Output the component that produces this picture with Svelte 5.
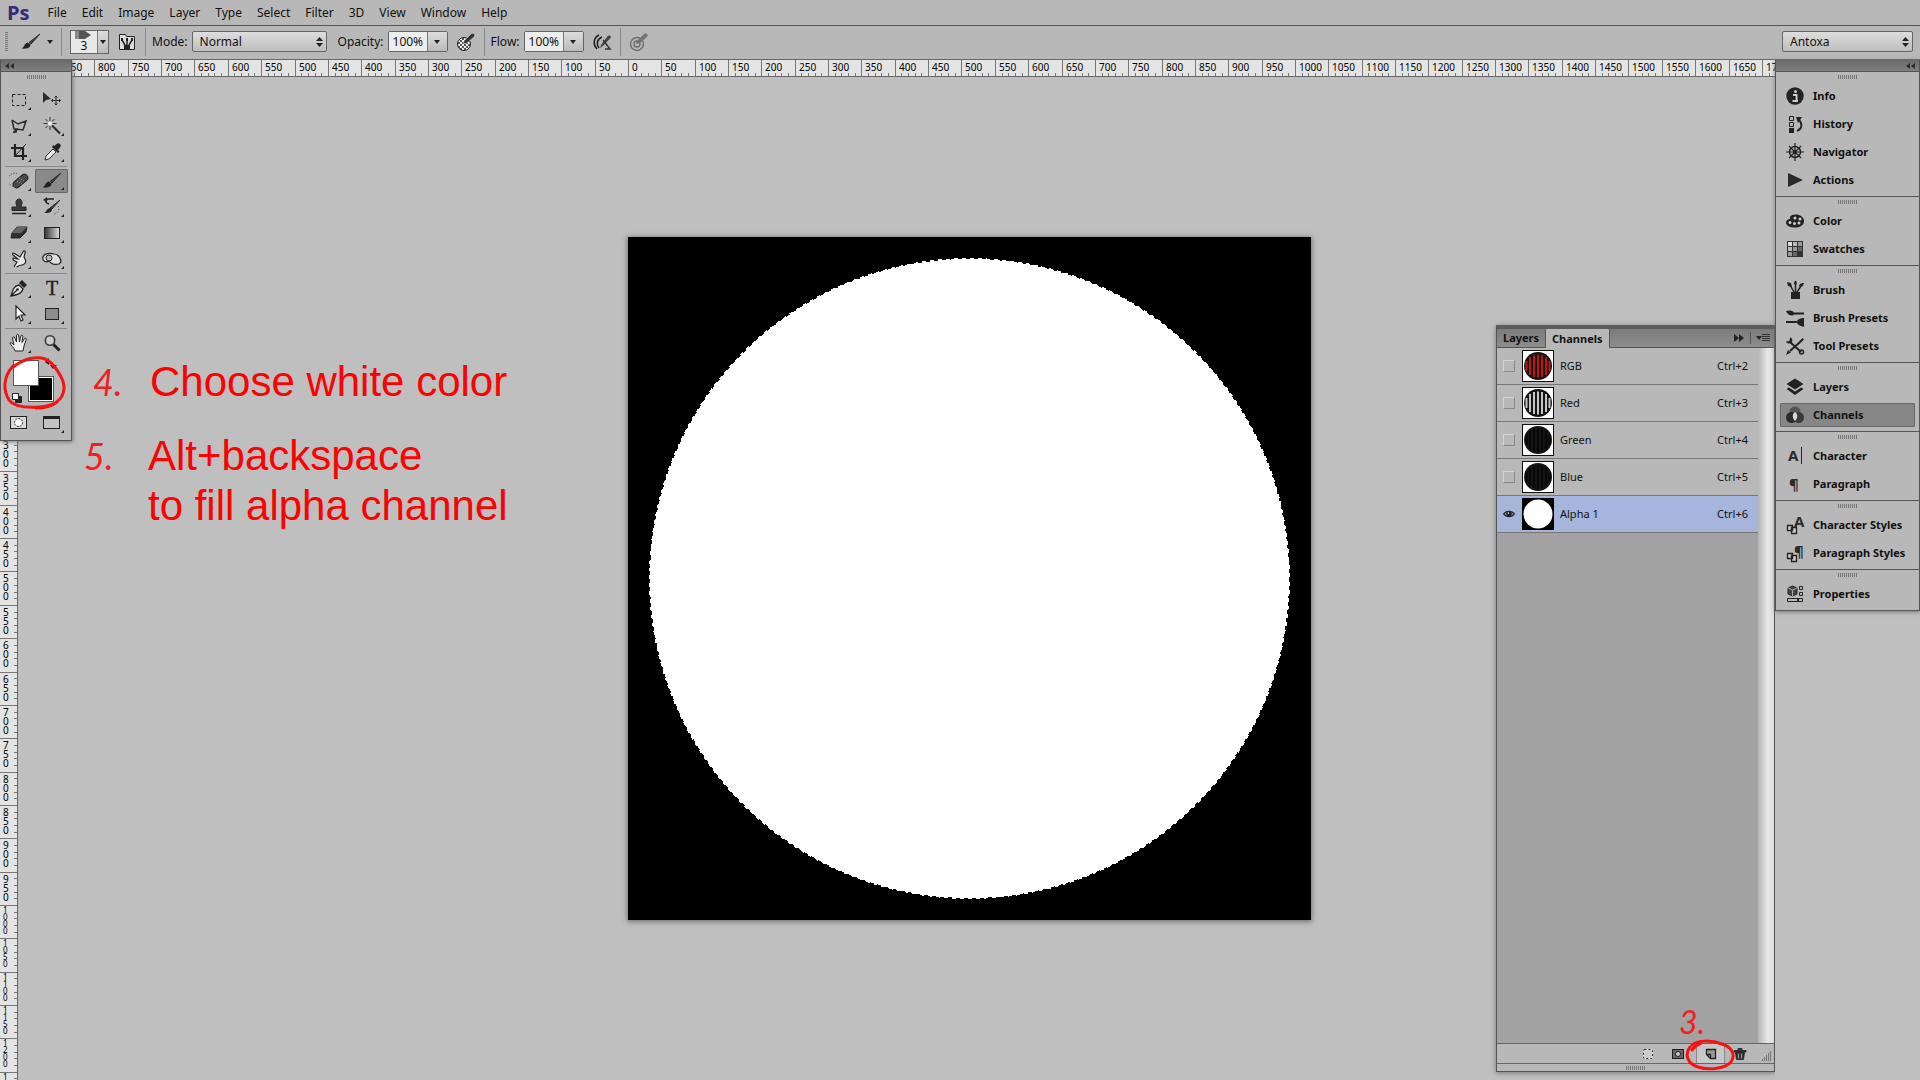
<script>
  const menus = ['File', 'Edit', 'Image', 'Layer', 'Type', 'Select', 'Filter', '3D', 'View', 'Window', 'Help'];

  const icons = {
    marquee: '<rect x="3.5" y="4.5" width="13" height="11" fill="none" stroke="#222" stroke-dasharray="3 2"/>',
    move: '<path d="M1 2v11l3-3 5-1z" fill="#2b2b2b"/><path d="M14 6v9M9.500 10.500h9M12.500 7.500l1.500-1.500 1.500 1.500M12.500 13.500l1.500 1.500 1.500-1.500M11 9l-1.500 1.500 1.500 1.500M17 9l1.500 1.500-1.500 1.500" fill="none" stroke="#2b2b2b"/>',
    lasso: '<path d="M3 4l6 4 8-3-3 9-7-1-2 4M3 4l2 9 3 0-1 3-3 0" fill="none" stroke="#2b2b2b" stroke-width="1.500"/>',
    wand: '<path d="M8 1v4M8 10v4M1.500 7.500h4M10.500 7.500h4M3.500 3l2.500 2.500M12.500 3l-2.500 2.500M3.500 12l2.500-2.500" stroke="#333"/><circle cx="8" cy="7.500" r="2" fill="#eee"/><path d="M10 9.500l8 8" stroke="#2b2b2b" stroke-width="2.200"/>',
    crop: '<path d="M6 2v12h12M2 6h12v12" fill="none" stroke="#222" stroke-width="2.200"/><path d="M17 2L6 14" stroke="#222"/>',
    dropper: '<path d="M3 18l1-4 7-7 3 3-7 7z" fill="#e8e8e8" stroke="#333"/><path d="M10 5l6 6 1.500-1.500-1.500-1.500 2-2.500a2.300 2.300 0 0 0-3.500-3.500l-2 2-1.200-1z" fill="#222"/>',
    heal: '<path d="M8 2.500a5.500 5.500 0 1 0-4 13" fill="none" stroke="#333" stroke-dasharray="1 1.500"/><rect x="3" y="6.500" width="17" height="7" rx="3.500" transform="rotate(-40 11.500 10)" fill="#4a4a4a" stroke="#222"/><path d="M8 10l5 3M10 7l5 3" stroke="#aaa" stroke-dasharray="1 1.500"/>',
    brush: '<path d="M19 2L10 12l-2-1.500z" fill="#444" stroke="#2b2b2b"/><path d="M9.500 12.500c0 4-5 4.500-9 4 3-1 2.500-5 6-6z" fill="#222"/>',
    stamp: '<path d="M8 9c-2-3-1-7 2-7s4 4 2 7v1h5v3.500H3V10h5z" fill="#3a3a3a" stroke="#222"/><path d="M3 16.500h14" stroke="#222" stroke-width="1.500"/>',
    histbrush: '<path d="M18 3L10 12l-2-1z" fill="#444" stroke="#2b2b2b"/><path d="M10 12c0 4-4 4-8 4 3-1 2-4 6-5z" fill="#222"/><path d="M12 2H6C3 3 3 6 7 7" fill="none" stroke="#222" stroke-width="1.500"/><path d="M5 0v5L1 3z" fill="#222"/><path d="M16 9c2 3 0 8-5 8" fill="none" stroke="#333" stroke-dasharray="1 2"/>',
    eraser: '<path d="M8 4h10l-1 5-6 6H2l1-5z" fill="#303030" stroke="#222"/><path d="M8 4h10l-6 6H3z" fill="#666"/>',
    gradient: '<defs><linearGradient id="toolGrad"><stop stop-color="#333"/><stop offset="1" stop-color="#ddd"/></linearGradient></defs><rect x="2.500" y="4.500" width="15" height="11" fill="url(#toolGrad)" stroke="#222"/>',
    smudge: '<path d="M5 18l3-5-3-1.500c-2-2-1-3 1-2L9 10 4 6c-1-2 0-2.500 1.500-1.500L11 8l3-5c1-2 3-1 2 1l-1 4 1.500 3c1 3-2 5.500-6 5.500l-3 1.500" fill="#e8e8e8" stroke="#222" stroke-width="1.200"/>',
    sponge: '<path d="M1 8c1-4 7-4 11-3 4 0 7 4 7 8l-2 2c-5 1-8 0-10-3-3 2-7 0-6-4z" fill="#ddd" stroke="#222" stroke-width="1.200"/><circle cx="7" cy="9" r="3" fill="#bbb" stroke="#222"/>',
    pen: '<path d="M2 18c2-7 3-10 8-11l4 4c-1 4-5 6-12 7zM2 18l6-6" fill="#e2e2e2" stroke="#222" stroke-width="1.300"/><circle cx="8.500" cy="11.500" r="1.300" fill="#222"/><path d="M10 5l3-3 5 5-3 3z" fill="#222"/>',
    pointer: '<path d="M7 2v13l3-3 2 5 2-1-2-5h4z" fill="#fff" stroke="#222" stroke-width="1.200"/>',
    shape: '<rect x="3.500" y="4.500" width="13" height="11" fill="#8c8c8c" stroke="#222"/>',
    hand: '<path d="M6 18c-1-4-4-5-5-8 1-1 2 0 4 2L3.500 5c0-1.500 2-1.500 2.300 0L7.500 9V2.500c.3-1.500 2-1.500 2.200 0L10.500 9l1.300-6c.4-1.300 2-1 2 .5L13 9.500l2.500-4c1-1 2.200 0 1.700 1L15 13l-1 5z" fill="#eee" stroke="#222"/>',
    zoom: '<circle cx="8" cy="7.500" r="4.700" fill="#ccc" stroke="#3a3a3a" stroke-width="1.600"/><path d="M11.500 11.500l6 6" stroke="#222" stroke-width="3"/>',
    mask: '<rect x="1.500" y="3.500" width="16" height="12" fill="#d8d8d8" stroke="#222"/><circle cx="9.500" cy="9.500" r="4" fill="#fff" stroke="#222" stroke-dasharray="2 1"/>',
    screen: '<rect x="1.500" y="3.500" width="16" height="12" fill="#c4c4c4" stroke="#222"/><path d="M1 4.500h17" stroke="#222" stroke-width="3"/>',
    info: '<circle cx="10" cy="10" r="8.700" fill="#222"/><path d="M8 9h3.500v6M7.500 15H13" stroke="#ccc" stroke-width="2"/><circle cx="10.500" cy="5.500" r="1.500" fill="#ccc"/>',
    history: '<path d="M4.500 2.500h4v4h-4zM4.500 8.500h4v4h-4z" fill="none" stroke="#222"/><path d="M4 14h5v5H4z" fill="#222"/><path d="M12 17c5-2 6-7 2-11" fill="none" stroke="#222" stroke-width="1.800"/><path d="M11 3h6l-4 6z" fill="#222"/>',
    navigator: '<circle cx="10" cy="10" r="5.500" fill="none" stroke="#222" stroke-width="1.500"/><path d="M10 1v18M1 10h18M4 4l12 12M16 4L4 16" stroke="#222" stroke-width="1.200"/><circle cx="10" cy="10" r="2" fill="#222"/>',
    actions: '<path d="M3 3l15 7-15 7z" fill="#2b2b2b"/>',
    color: '<path d="M1 12c0-3 2-4 4-4l0-2c2-3 7-3 11-1 4 2 4 8 0 10-3 2-9 2-13 0-1-1-2-2-2-3z" fill="#222"/><g fill="#ccc"><circle cx="5" cy="11.500" r="1.500"/><circle cx="9.500" cy="12.500" r="1.500"/><circle cx="14" cy="12" r="1.500"/><circle cx="15" cy="8" r="1.500"/><circle cx="10" cy="7" r="1.500"/></g>',
    swatches: '<path d="M2 2h16v16H2z" fill="#333"/><g><path d="M3 3h4v4H3z" fill="#ddd"/><path d="M8 3h4v4H8zM3 8h4v4H3z" fill="#bbb"/><path d="M13 3h4v4h-4zM8 8h4v4H8zM3 13h4v4H3z" fill="#999"/><path d="M13 8h4v4h-4zM8 13h4v4H8z" fill="#666"/></g>',
    brushes: '<path d="M6 12h9v7H6z" fill="#222"/><path d="M9 12L5 5M10.500 12V4M12 12l4-6" stroke="#222" stroke-width="1.500"/><path d="M2 2l4 1 1 4-4-1zM9 4c0-2 1-4 2-3s1 3 0 4zM14 6c1-3 3-3 5-3-1 3-2 4-4 4z" fill="#222"/>',
    presets: '<path d="M8 5.500h11M1 14h11" stroke="#222" stroke-width="1.800"/><path d="M1 3c3-1 8-1 8 2.500S3 8 1 3zM12 14c0-3 4-4 7-4v9c-3-1-7-2-7-5z" fill="#222"/>',
    tools: '<path d="M5 6l11 10M14 7L5 15" stroke="#222" stroke-width="2"/><path d="M5 1.500L4.500 5 1 5.500C2 8 5 8 6.500 6.500S7.500 2 5 1.500z" fill="#222"/><circle cx="16.500" cy="16" r="2" fill="none" stroke="#222" stroke-width="1.500"/><path d="M1 19l2-5 3 2.500zM13 6.500L17.500 2l1.500 1.500L14.500 8z" fill="#222"/>',
    layers: '<path d="M10 1.500l8.500 5.500-8.500 5.500L1.500 7z" fill="#222"/><path d="M1.500 12L4 10.500l6 4 6-4 2.500 1.500-8.500 6z" fill="#222"/>',
    channels: '<circle cx="10" cy="7" r="5.500" fill="#555"/><circle cx="6.500" cy="12.500" r="5.500" fill="#2b2b2b"/><circle cx="13.500" cy="12.500" r="5.500" fill="#3a3a3a"/><path d="M10 7c3 2 3 6 0 9-3-3-3-7 0-9z" fill="#d8d8d8"/>',
    character: '<path d="M16.500 1v17" stroke="#222"/>',
    paragraph: '',
    charstyles: '<path d="M6.500 12.500h5v6h-5zM2.500 10.500h5v5h-5z" fill="#c8c8c8" stroke="#222" stroke-width="1.300"/>',
    parstyles: '<path d="M6.500 12.500h5v6h-5zM2.500 10.500h5v5h-5z" fill="#c8c8c8" stroke="#222" stroke-width="1.300"/>',
    properties: '<path d="M3 4l4.500-2L12 4v6l-4.500 2L3 10z" fill="#444" stroke="#222"/><path d="M3 4l4.500 2L12 4M7.500 6v6" stroke="#aaa" fill="none"/><path d="M14.500 2.500h3v3h-3zM14.500 8.500h3v3h-3zM2.500 14.500h15v3h-15z" fill="none" stroke="#222"/><path d="M12 15h2v2h-2z" fill="#222"/>',
    folder: '<path d="M2.500 2.500h6l1 2h8v13h-15z" fill="#ddd" stroke="#222"/><path d="M7 13h6v4H7z" fill="#222"/><path d="M8 13L5 8M10 13V7M12 13l3-5" stroke="#222" stroke-width="1.500"/><path d="M4 6h2v3H4zM9 6h2v3H9zM14 6h2v3h-2z" fill="#222"/>',
    tabletOpacity: '<defs><pattern id="check" width="4" height="4" patternUnits="userSpaceOnUse"><path d="M0 0h4v4H0z" fill="#eee"/><path d="M0 0h2v2H0zM2 2h2v2H2z" fill="#555"/></pattern></defs><circle cx="8" cy="12" r="6.500" fill="url(#check)" stroke="#222"/><path d="M7 12l1-3 7-7c2-2 5 1 3 3l-7 6z" fill="#333" stroke="#ccc" stroke-width=".6"/>',
    airbrush: '<path d="M7 3c-6 3-6 10-2 14M10 5c-5 2-6 7-3 11" fill="none" stroke="#222" stroke-width="1.600"/><path d="M8 16l1-3 6-8c2-3 5-1 3.500 1L12 13z" fill="#444"/><path d="M11 8l7 9h-5" fill="none" stroke="#333" stroke-width="1.500"/>',
    tabletSize: '<g opacity=".5"><circle cx="8" cy="12" r="6.500" fill="none" stroke="#222" stroke-width="1.400"/><circle cx="8" cy="12" r="3" fill="none" stroke="#222" stroke-width="1.400"/><path d="M7 12l1-3 7-7c2-2 5 1 3 3l-7 6z" fill="#333"/></g>',
    eye: '<path d="M1 10c4-6 14-6 18 0-4 6-14 6-18 0z" fill="#8690a8" stroke="#222" stroke-width="2"/><circle cx="10" cy="10" r="4.500" fill="#222"/><circle cx="9" cy="8.500" r="1.300" fill="#ddd"/>',
    loadSel: '<rect x="5.500" y="5.500" width="9" height="9" rx="1" fill="#ccc" stroke="#eee"/><rect x="5.500" y="5.500" width="9" height="9" rx="1" fill="none" stroke="#222" stroke-dasharray="2 2"/>',
    saveSel: '<rect x="4.500" y="5.500" width="11" height="9" fill="#666" stroke="#222"/><circle cx="10" cy="10" r="2.500" fill="#ccc" stroke="#222"/>',
    newChan: '<path d="M5.500 5.500h9v9H9.500l-4-4zM5.500 10.500h4v4" fill="#999" stroke="#222" stroke-width="1.300"/>',
    trash: '<path d="M5.500 8.500l1 7h7l1-7zM4 6.500h12v1.500H4zM8 6V4.500h4V6" fill="#333" stroke="#222" stroke-width=".8"/><path d="M8.500 9.500v5M11.500 9.500v5" stroke="#999"/>'
  };

  const toolGroups = [
    ['marquee', 'move', 'lasso', 'wand', 'crop', 'dropper'],
    ['heal', 'brush', 'stamp', 'histbrush', 'eraser', 'gradient', 'smudge', 'sponge'],
    ['pen', 'type', 'pointer', 'shape'],
    ['hand', 'zoom']
  ];
  const noFlyout = ['move', 'zoom', 'mask'];
  const viewTools = ['mask', 'screen'];

  const dock = [
    [['info', 'Info'], ['history', 'History'], ['navigator', 'Navigator'], ['actions', 'Actions']],
    [['color', 'Color'], ['swatches', 'Swatches']],
    [['brushes', 'Brush'], ['presets', 'Brush Presets'], ['tools', 'Tool Presets']],
    [['layers', 'Layers'], ['channels', 'Channels']],
    [['character', 'Character'], ['paragraph', 'Paragraph']],
    [['charstyles', 'Character Styles'], ['parstyles', 'Paragraph Styles']],
    [['properties', 'Properties']]
  ];

  const channels = [
    { name: 'RGB', key: 'Ctrl+2', stripe: '#c01410' },
    { name: 'Red', key: 'Ctrl+3', stripe: '#c4c4c4' },
    { name: 'Green', key: 'Ctrl+4', stripe: '#060606' },
    { name: 'Blue', key: 'Ctrl+5', stripe: '#060606' },
    { name: 'Alpha 1', key: 'Ctrl+6', stripe: null }
  ];

  // Document zoom: 50 document units span this many screen pixels.
  const STEP = 683 / 1024 * 50;
  const marks = (origin, from, to) =>
    Array.from({ length: to - from + 1 }, (_, i) => ({
      label: String(Math.abs(from + i) * 50),
      at: Math.round(origin + (from + i) * STEP),
      minor: [1, 2, 3, 4].map((n) => Math.round(origin + (from + i + n / 5) * STEP))
    }));
  const across = marks(628, -17, 34);
  const down = marks(161, 5, 25);
</script>

{#snippet icon(name)}
  <svg class="icon" viewBox="0 0 20 20" aria-hidden="true">
    {@html icons[name] ?? ''}
    {#if name === 'type'}<text class="serif" x="10" y="17" text-anchor="middle">T</text>{/if}
    {#if name === 'character'}<text class="glyph" x="3" y="15">A</text>{/if}
    {#if name === 'paragraph'}<text class="glyph" x="4" y="16">¶</text>{/if}
    {#if name === 'charstyles'}<text class="glyph" x="9" y="12">A</text>{/if}
    {#if name === 'parstyles'}<text class="glyph" x="9" y="14">¶</text>{/if}
  </svg>
{/snippet}

{#snippet toolButton(name)}
  <button class="tool" class:active={name === 'brush'} aria-label={name}>
    {@render icon(name)}
    {#if !noFlyout.includes(name)}<span class="flyout"></span>{/if}
  </button>
{/snippet}

{#snippet updown()}
  <svg class="updown" viewBox="0 0 7 10" aria-hidden="true"><path d="M0 4l3.500-4L7 4zM0 6h7l-3.500 4z" fill="#222" /></svg>
{/snippet}

<div class="app">
  <nav class="menubar" aria-label="Main menu">
    <span class="logo">Ps</span>
    {#each menus as m}<button class="menu">{m}</button>{/each}
  </nav>

  <div class="options">
    <span class="vgrip"></span>
    <button class="preset" aria-label="Tool preset">{@render icon('brush')}<span class="caret"></span></button>
    <span class="rule"></span>
    <button class="size" aria-label="Brush size">
      <span class="tip">
        <svg viewBox="0 0 18 8" aria-hidden="true"><path d="M0 0h10l6 4-6 4H0z" fill="#555" /><path d="M0 0h4v8H0z" fill="#888" /></svg>
        3
      </span>
      <span class="drop"><span class="caret"></span></span>
    </button>
    <button class="plain" aria-label="Brush panel">{@render icon('folder')}</button>
    <span class="rule"></span>
    <label for="mode">Mode:</label>
    <span class="select mode"><select id="mode"><option>Normal</option></select>{@render updown()}</span>
    <label for="opacity">Opacity:</label>
    <span class="combo"><input id="opacity" value="100%" /><button aria-label="Opacity slider"><span class="caret"></span></button></span>
    <button class="plain" aria-label="Pressure for opacity">{@render icon('tabletOpacity')}</button>
    <span class="rule"></span>
    <label for="flow">Flow:</label>
    <span class="combo"><input id="flow" value="100%" /><button aria-label="Flow slider"><span class="caret"></span></button></span>
    <button class="plain" aria-label="Airbrush">{@render icon('airbrush')}</button>
    <span class="rule"></span>
    <button class="plain" aria-label="Pressure for size">{@render icon('tabletSize')}</button>
    <span class="select workspace"><select aria-label="Workspace"><option>Antoxa</option></select>{@render updown()}</span>
  </div>

  <div class="desk">
    <main class="view">
      <svg class="hruler" aria-hidden="true">
        {#each across as m}
          <path d="M{m.at + 0.5} 0v16" />
          <path d={m.minor.map((x) => `M${x + 0.5} 13v3`).join('')} />
          <text x={m.at + 4} y="11">{m.label}</text>
        {/each}
      </svg>
      <svg class="vruler" aria-hidden="true">
        {#each down as m}
          <path d="M0 {m.at + 0.5}h17" />
          <path d={m.minor.map((y) => `M14 ${y + 0.5}h3`).join('')} />
          <text y={m.at + (m.label.length > 3 ? 1 : 2)} class:small={m.label.length > 3}>
            {#each m.label as d}<tspan x="3" dy={m.label.length > 3 ? 7 : 9}>{d}</tspan>{/each}
          </text>
        {/each}
      </svg>

      <svg class="document" viewBox="0 0 683 683" role="img" aria-label="Alpha channel">
        <rect width="683" height="683" />
        <circle cx="341.500" cy="341.500" r="320.500" fill="#fff" shape-rendering="crispEdges" />
        <circle cx="341.500" cy="341.500" r="320" fill="none" stroke="#000" stroke-dasharray="4 4" shape-rendering="crispEdges" />
      </svg>

      <p class="note four"><span class="num">4.</span><span>Choose white color</span></p>
      <p class="note five"><span class="num">5.</span><span>Alt+backspace<br />to fill alpha channel</span></p>

      <aside class="toolbar" aria-label="Tools">
        <div class="strip"><svg viewBox="0 0 9 6" aria-hidden="true"><path d="M4 0v6L0 3zM9 0v6L5 3z" /></svg></div>
        <span class="grip"></span>
        {#each toolGroups as group, i}
          {#if i}<hr />{/if}
          <div class="tools">{#each group as t}{@render toolButton(t)}{/each}</div>
        {/each}
        <div class="swatches">
          <button class="bg" aria-label="Background color"></button>
          <button class="fg" aria-label="Foreground color"></button>
          <svg viewBox="0 0 70 55" aria-hidden="true">
            <path d="M14.500 40.500h6v6h-6z" fill="#222" stroke="#222" /><path d="M11.500 37.500h6v6h-6z" fill="#fff" stroke="#222" />
            <path d="M47 6c3 0 5 2 5 5" fill="none" stroke="#222" stroke-width="1.500" /><path d="M44 6l4-4v7zM49 9h7l-4 4z" fill="#222" />
          </svg>
        </div>
        <div class="tools">{#each viewTools as t}{@render toolButton(t)}{/each}</div>
        <svg class="ring left" viewBox="0 0 64 58" aria-hidden="true">
          <path d="M10 12C22 3 34 1 42 4c8 3 20 20 19 30-1 10-9 17-24 18-14 1-26 0-31-7C0 35 0 22 10 11M33 53c10 0 16-2 21-6" />
        </svg>
      </aside>

      <section class="panel" aria-label="Channels">
        <div class="tabs">
          <button class="tab">Layers</button>
          <button class="tab on">Channels</button>
          <svg viewBox="0 0 38 12" aria-hidden="true">
            <path d="M1 2v8l5-4zM6 2v8l5-4z" fill="#222" /><path d="M17.500 0v12" stroke="#555" />
            <path d="M23 4h6l-3 4z" fill="#222" /><path d="M29 2.500h8M29 4.500h8M29 6.500h8M29 8.500h8" stroke="#333" />
          </svg>
        </div>
        <div class="body">
          <ul>
            {#each channels as c}
              <li class:sel={!c.stripe}>
                <label class="vis">
                  <input type="checkbox" checked={!c.stripe} aria-label="Show {c.name}" />
                  {#if !c.stripe}{@render icon('eye')}{/if}
                </label>
                <svg class="thumb" viewBox="0 0 32 32" aria-hidden="true">
                  {#if c.stripe}
                    <rect x=".5" y=".5" width="31" height="31" fill="#fff" stroke="#111" />
                    <circle cx="16" cy="16" r="14" fill="#141414" />
                    <path d="M4.500 11v10M8 7v18M12 5v22M16 4.500v23M20 5v22M24 7v18M27.500 11v10" stroke={c.stripe} stroke-width="2" />
                  {:else}
                    <rect width="32" height="32" /><circle cx="16" cy="16" r="14.500" fill="#fff" />
                  {/if}
                </svg>
                <span>{c.name}</span>
                <kbd>{c.key}</kbd>
              </li>
            {/each}
          </ul>
          <div class="scroll"></div>
        </div>
        <div class="actions">
          <button aria-label="Load selection">{@render icon('loadSel')}</button>
          <button aria-label="Save selection">{@render icon('saveSel')}</button>
          <button class="hot" aria-label="New channel">{@render icon('newChan')}</button>
          <button aria-label="Delete channel">{@render icon('trash')}</button>
          <svg class="corner" viewBox="0 0 10 10" aria-hidden="true"><path d="M8 1h1M6 3h1M8 3h1M4 5h1M6 5h1M8 5h1M2 7h1M4 7h1M6 7h1M8 7h1M0 9h1M2 9h1M4 9h1M6 9h1M8 9h1" stroke="#333" /></svg>
        </div>
        <div class="foot"><span class="grip"></span></div>
        <span class="num three">3.</span>
        <svg class="ring right" viewBox="0 0 52 34" aria-hidden="true">
          <path d="M6 8c-6 8-2 17 8 20 12 4 28 1 33-5 5-7 1-15-9-18C28 1 13 1 8 6M17 4c-5 2-7 4-9 7" />
        </svg>
      </section>
    </main>

    <aside class="dock" aria-label="Panels">
      <div class="strip end"><svg viewBox="0 0 9 6" aria-hidden="true"><path d="M4 0v6L0 3zM9 0v6L5 3z" /></svg></div>
      {#each dock as group}
        <div class="group">
          <span class="grip"></span>
          {#each group as [id, label]}
            <button class:on={id === 'channels'}>{@render icon(id)}{label}</button>
          {/each}
        </div>
      {/each}
    </aside>
  </div>
</div>

<style>
  :global(body) { margin: 0; background: #bfbfbf; }
  .app { display: flex; flex-direction: column; height: 100vh; overflow: hidden; font: 12px/16px "Noto Sans", sans-serif; color: #111; }
  .app * { box-sizing: border-box; }
  button { font: inherit; color: inherit; background: none; border: 0; padding: 0; margin: 0; }
  svg { display: block; flex: none; }
  .icon { width: 20px; height: 20px; }
  .serif { font: 20px "Liberation Serif", serif; fill: #222; stroke: #222; stroke-width: .4px; }
  .glyph { font: bold 15px "Noto Sans", sans-serif; fill: #2b2b2b; }

  .menubar { display: flex; align-items: center; gap: 15px; flex: none; height: 25px; padding: 0 7px; background: #b8b8b8; }
  .logo { font: bold 20px/24px "Open Sans", sans-serif; color: #352b76; margin-right: 3px; }

  .options { display: flex; align-items: center; flex: none; height: 35px; padding: 0 7px 2px 5px; background: #b8b8b8; border-top: 1px solid #555; border-bottom: 1px solid #666; }
  .options .rule { width: 1px; height: 28px; background: #888; margin: 0 8px; }
  .vgrip { width: 3px; height: 20px; background: repeating-linear-gradient(#777 0 1px, transparent 1px 2px); margin-right: 13px; }
  .preset { display: flex; align-items: center; gap: 6px; }
  .caret { border: 3px solid transparent; border-top: 4px solid #222; border-bottom: 0; }
  .size { display: flex; width: 39px; height: 24px; border: 1px solid #666; }
  .tip { flex: 1; background: #e8e8e8; line-height: 14px; }
  .tip svg { width: 18px; height: 8px; margin-left: 4px; }
  .drop { display: flex; align-items: center; justify-content: center; width: 11px; border-left: 1px solid #777; background: linear-gradient(#ddd, #bbb); }
  .plain { margin-left: 8px; }
  .rule + .plain { margin-left: 0; }
  .options label { margin-right: 4px; margin-left: -2px; }
  .select { display: grid; align-items: center; height: 21px; }
  .select > :global(*) { grid-area: 1 / 1; }
  select { width: 100%; height: 21px; appearance: none; font: inherit; color: #111; padding: 0 7px; border: 1px solid #666; border-radius: 2px; background: linear-gradient(#dedede, #bdbdbd); }
  .updown { width: 7px; height: 10px; justify-self: end; margin-right: 4px; pointer-events: none; }
  .mode { width: 135px; margin-right: 13px; }
  .workspace { width: 131px; margin-left: auto; }
  .combo { display: flex; height: 21px; width: 60px; border: 1px solid #666; border-radius: 2px; }
  .combo input { width: 38px; border: 0; padding: 0 0 0 4px; font: inherit; color: #111; background: #eee; }
  .combo button { display: flex; align-items: center; justify-content: center; flex: 1; border-left: 1px solid #777; background: linear-gradient(#ddd, #bbb); }

  .desk { display: flex; flex: 1; min-height: 0; }
  .view { position: relative; flex: 1; min-width: 0; display: flex; flex-direction: column; overflow: hidden; }
  .hruler { width: 100%; height: 17px; background: #e4e4e4; border-bottom: 1px solid #666; font-size: 10px; }
  .vruler { width: 18px; flex: 1; background: #e4e4e4; border-right: 1px solid #666; font-size: 10px; }
  .vruler .small { font-size: 8px; }
  .hruler path, .vruler path { stroke: #777; }

  .document { position: absolute; left: 628px; top: 177px; width: 683px; box-shadow: 0 1px 5px 1px #777; }

  .note { position: absolute; display: flex; margin: 0; font: 42px/50px "Liberation Sans", Arial, sans-serif; color: #f00; white-space: nowrap; }
  .num { font: italic 36px/50px Lato, sans-serif; color: #f02020; }
  .note .num { width: 57px; }
  .note.five .num { width: 64px; }
  .four { left: 93px; top: 297px; }
  .five { left: 84px; top: 371px; }

  .strip { display: flex; align-items: center; height: 12px; padding: 0 4px; background: linear-gradient(#6a6a6a, #808080); border-bottom: 1px solid #555; }
  .strip svg { width: 9px; height: 6px; fill: #2b2b2b; }
  .end { justify-content: flex-end; height: 11px; border: 0; }
  .grip { display: block; width: 19px; height: 4px; margin: 0 auto; background: repeating-linear-gradient(90deg, #777 0 1px, transparent 1px 2px); }

  .toolbar { position: absolute; left: 0; top: 0; width: 72px; background: #b8b8b8; border: 1px solid #555; border-top: 0; padding-bottom: 4px; box-shadow: 1px 1px 4px #777; }
  .toolbar > .grip { margin: 3px auto 8px; }
  .tools { display: grid; grid-template-columns: 33px 33px; padding-left: 1px; }
  hr { height: 1px; border: 0; background: #888; margin: 1px 4px; }
  .tool { position: relative; display: flex; align-items: center; justify-content: center; height: 26px; }
  .tool.active { background: #8a8a8a; box-shadow: inset 0 0 0 1px #666; border-radius: 2px; height: 24px; margin: 1px 0; }
  .flyout { position: absolute; right: 4px; bottom: 3px; border-left: 3px solid transparent; border-bottom: 3px solid #222; }
  .swatches { position: relative; height: 54px; }
  .swatches svg { position: absolute; left: 0; top: 0; width: 70px; height: 55px; pointer-events: none; }
  .swatches button { position: absolute; width: 26px; height: 26px; border: 1px solid #555; }
  .fg { left: 12px; top: 4px; background: #fff; }
  .bg { left: 27px; top: 20px; background: #000; box-shadow: inset 0 0 0 1px #fff; }
  .ring { position: absolute; fill: none; stroke: #f51414; stroke-width: 3px; stroke-linecap: round; pointer-events: none; }
  .left { left: 2px; top: 295px; width: 64px; height: 58px; }

  .panel { position: absolute; right: 0; top: 265px; bottom: 8px; width: 279px; display: flex; flex-direction: column; background: #b8b8b8; border: 1px solid #555; border-top: 4px solid #5c5c5c; box-shadow: 0 1px 5px #777; font-size: 11px; }
  .tabs { display: flex; height: 19px; flex: none; background: linear-gradient(#7c7c7c, #8c8c8c); border-bottom: 1px solid #555; box-shadow: 0 2px 0 #c8c8c8; font-weight: 700; }
  .tab { padding: 0 6px; border-right: 1px solid #555; }
  .tab.on { background: #b8b8b8; height: 19px; }
  .tabs svg { width: 38px; height: 12px; margin: 3px 3px 0 auto; }
  .body { display: flex; flex: 1; min-height: 0; background: #a2a2a2; }
  ul { list-style: none; flex: 1; margin: 0; padding: 0; }
  li { display: flex; align-items: center; height: 37px; padding: 0 10px 0 6px; background: #b8b8b8; border-bottom: 1px solid #777; }
  li.sel { background: #a5b5db; }
  .vis { display: grid; place-items: center; width: 12px; height: 12px; }
  .vis > :global(*) { grid-area: 1 / 1; }
  .vis .icon { width: 12px; height: 12px; }
  .vis input { appearance: none; width: 12px; height: 12px; margin: 0; border: 1px solid #d4d4d4; border-right-color: #888; border-bottom-color: #888; }
  .sel input { opacity: 0; }
  .thumb { width: 32px; height: 32px; margin: 0 6px 0 7px; }
  kbd { font: inherit; margin-left: auto; }
  .scroll { width: 16px; background: linear-gradient(90deg, #b4b4b4, #e8e8e8 60%, #ddd); }
  .actions { display: flex; align-items: stretch; flex: none; height: 20px; border-top: 1px solid #666; justify-content: flex-end; }
  .actions button { display: flex; align-items: center; justify-content: center; width: 30px; overflow: hidden; }
  .actions .hot { background: #c8c8c8; border: solid #888; border-width: 0 1px; width: 29px; margin-left: 3px; }
  .corner { width: 10px; height: 10px; align-self: flex-end; margin: 0 2px 2px 7px; }
  .foot { flex: none; height: 8px; padding-top: 2px; border-top: 1px solid #666; }
  .three { position: absolute; right: 69px; bottom: 24px; font-size: 32px; }
  .right { right: 38px; bottom: -2px; width: 52px; height: 34px; }

  .dock { align-self: flex-start; flex: none; width: 145px; background: #b8b8b8; border: 1px solid #555; border-top: 0; box-shadow: 0 1px 4px #777; z-index: 1; font-size: 11px; font-weight: 700; }
  .group { display: flex; flex-direction: column; border-top: 1px solid #555; padding-bottom: 4px; }
  .group .grip { margin: 3px auto 1px; }
  .group button { display: flex; align-items: center; gap: 8px; height: 24px; margin: 4px 4px 0; padding: 0 0 0 5px; border-radius: 2px; white-space: nowrap; }
  .group button.on { background: #868686; box-shadow: inset 0 0 0 1px #666; }
</style>
